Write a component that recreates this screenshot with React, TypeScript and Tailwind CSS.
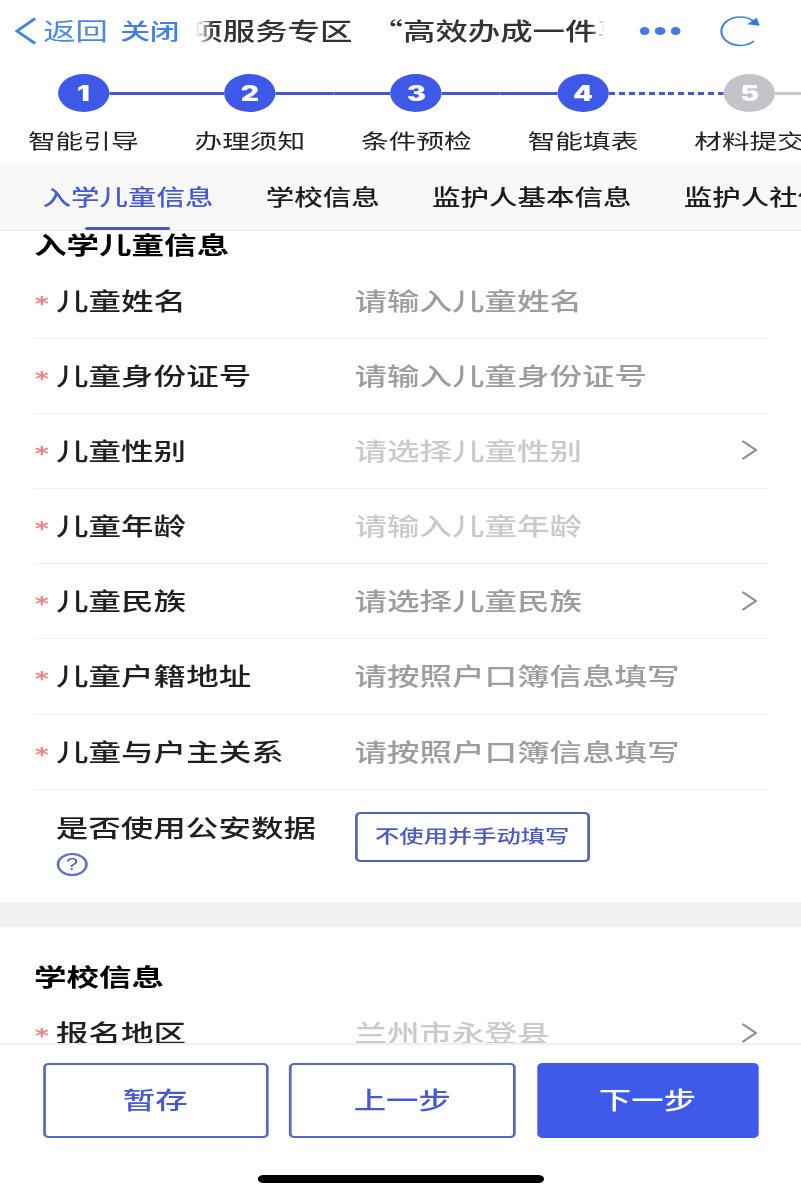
import clsx from "clsx";

type Field = {
    label: string;
    placeholder: string;
    muted?: boolean;
    select?: boolean;
};

const steps = ["智能引导", "办理须知", "条件预检", "智能填表", "材料提交"];
const tabs = ["入学儿童信息", "学校信息", "监护人基本信息", "监护人社保信息"];
const currentStep = 4;

const childFields: Field[] = [
    { label: "儿童姓名", placeholder: "请输入儿童姓名" },
    { label: "儿童身份证号", placeholder: "请输入儿童身份证号" },
    { label: "儿童性别", placeholder: "请选择儿童性别", muted: true, select: true },
    { label: "儿童年龄", placeholder: "请输入儿童年龄", muted: true },
    { label: "儿童民族", placeholder: "请选择儿童民族", select: true },
    { label: "儿童户籍地址", placeholder: "请按照户口簿信息填写" },
    { label: "儿童与户主关系", placeholder: "请按照户口簿信息填写" },
];

function NavBar() {
    return (
        <header className="flex h-[62px] shrink-0 items-center pl-[11px]">
            <svg width="16" height="28" viewBox="0 0 16 28" fill="none" stroke="#3f86e0" strokeWidth="2.4">
                <path d="M15 1.5L1.5 14L15 26.5" />
            </svg>
            <span className="ml-[5px] pb-[2px] text-[24px] text-[#4a88e2]">返回</span>
            <span className="ml-[9px] pb-[3px] text-[22px] font-medium text-[#3f80e0]">关闭</span>
            {/* Scrolling title, faded on both edges */}
            <div className="ml-[12px] flex w-[305px] overflow-hidden pb-[2px] whitespace-nowrap text-[24px] font-medium text-[#333] [mask-image:linear-gradient(to_right,transparent,black_14px,black_292px,transparent_303px)]">
                <span className="-ml-[4px]">项服务专区</span>
                <span className="ml-[13.5px]">“高效办成一件事”</span>
            </div>
            <div className="ml-[23.5px] flex gap-[4px]">
                <i className="size-[7.5px] rounded-full bg-[#4479e6]" />
                <i className="size-[7.5px] rounded-full bg-[#4479e6]" />
                <i className="size-[7.5px] rounded-full bg-[#4479e6]" />
            </div>
            <svg className="ml-[28.7px]" width="31" height="32" viewBox="0 0 31 32" fill="none">
                <path d="M25.5 26A14 14.2 0 1 1 25.5 6.5" stroke="#3f82d8" strokeWidth="1.6" />
                <path d="M29.8 10.8L20.5 9.2L27.5 2.8Z" fill="#2f7cd6" />
            </svg>
        </header>
    );
}

function Stepper() {
    return (
        <div className="flex h-[101px] w-[620px] shrink-0">
            {steps.map((step, index) => {
                const number = index + 1;
                const done = number <= currentStep;
                return (
                    <div key={step} className="flex w-[123.4px] shrink-0 flex-col items-center pt-[12px]">
                        <div className="flex w-full items-center">
                            <span
                                className={clsx(
                                    "h-[3px] flex-1",
                                    index > 0 && done && "bg-[#4658cf]",
                                    !done && "bg-[repeating-linear-gradient(to_left,#4658cf_0_4.4px,transparent_4.4px_7.4px)]"
                                )}
                            />
                            <span
                                className={clsx(
                                    "flex size-[38px] items-center justify-center rounded-full pt-[2px] font-[Inter] text-[21px] font-black text-white",
                                    done ? "bg-[#3e58e8]" : "bg-[#c3c3cb]"
                                )}
                            >
                                {number}
                            </span>
                            <span
                                className={clsx(
                                    "h-[3px] flex-1",
                                    number < currentStep && "bg-[#4658cf]",
                                    number === currentStep && "bg-[repeating-linear-gradient(to_right,#4658cf_0_4.4px,transparent_4.4px_7.4px)]",
                                    !done && "bg-[#c8c8cc]"
                                )}
                            />
                        </div>
                        <span className="mt-[12.5px] text-[20.5px] leading-[30px] text-[#222]">{step}</span>
                    </div>
                );
            })}
        </div>
    );
}

function Tabs() {
    return (
        <nav className="flex h-[68px] shrink-0 gap-[38.8px] overflow-hidden border-b border-[#eee] bg-[#f8f8f9] pl-[31.5px]">
            {tabs.map((tab, index) => (
                <div
                    key={tab}
                    className={clsx(
                        "flex shrink-0 flex-col items-center text-[21.1px] font-medium",
                        index === 0 ? "text-[#4659d6]" : "text-[#1c1c1c]"
                    )}
                >
                    <span className="pt-[18px] leading-[30px]">{tab}</span>
                    {index === 0 && <i className="mt-auto h-[3px] w-[63px] rounded-full bg-[#4a55cc]" />}
                </div>
            ))}
        </nav>
    );
}

function FieldRow({ label, placeholder, muted, select }: Field) {
    return (
        <div className="mx-[25px] flex h-[75.17px] shrink-0 items-center border-b border-[#f0f0f0] text-[24.1px] font-medium">
            <span className="w-[16.5px] pt-[4px] pl-[0.7px] font-['DejaVu_Sans'] text-[20px] font-bold text-[#ee8380]">*</span>
            <span className="w-[221px] pb-[2px] text-[#1f1f1f]">{label}</span>
            <span className={clsx("flex-1 pb-[2px]", muted ? "text-[#cacaca]" : "text-[#9d9d9d]")}>{placeholder}</span>
            {select && (
                <svg className="mr-[8.5px] mb-[1px]" width="12" height="20" viewBox="0 0 12 20" fill="none" stroke="#909090" strokeWidth="1.9">
                    <path d="M1 1L11 10L1 19" />
                </svg>
            )}
        </div>
    );
}

function Footer() {
    return (
        <footer className="flex h-[152px] shrink-0 flex-col items-center border-t-2 border-[#efefef] bg-white pt-[18px]">
            <div className="flex h-[75px] w-full gap-[15.5px] pr-[32.3px] pl-[31.5px] text-[24px] font-medium">
                <button className="w-[167px] rounded-[4px] border-2 border-[#5767c6] pb-[4px] text-[#4659cf]">暂存</button>
                <button className="w-[168px] rounded-[4px] border-2 border-[#5767c6] pb-[4px] text-[#4659cf]">上一步</button>
                <button className="flex-1 rounded-[4px] bg-[#3f59e8] pb-[4px] text-white">下一步</button>
            </div>
            <div className="mt-[37px] h-[8px] w-[212px] rounded-full bg-black" />
        </footer>
    );
}

export default function App() {
    return (
        <div className="h-[1195px] w-[801px] overflow-hidden bg-white">
            <div className="flex h-[1195px] w-[594px] origin-top-left scale-x-[1.35] flex-col overflow-hidden bg-white font-['Noto_Sans_CJK_SC',sans-serif]">
                <NavBar />
                <Stepper />
                <Tabs />

                <main className="flex h-[812px] shrink-0 flex-col overflow-hidden">
                    <h2 className="h-[32.6px] shrink-0 pl-[25.2px] text-[24.1px] leading-[25px] font-bold text-black">入学儿童信息</h2>
                    {childFields.map((field) => (
                        <FieldRow key={field.label} {...field} />
                    ))}

                    <div className="flex h-[112.4px] shrink-0 pt-[22px] pl-[41.3px]">
                        <div className="w-[221.5px] text-[24.1px] leading-[29px] font-medium text-[#1f1f1f]">
                            是否使用公安数据
                            <span className="mt-[12px] ml-[0.5px] flex size-[23px] items-center justify-center rounded-full border-2 border-[#5f6fcc] font-['Liberation_Sans'] text-[16px] font-normal text-[#4558c0]">
                                ?
                            </span>
                        </div>
                        <button className="h-[50px] w-[174px] rounded-[4px] border-2 border-[#5560bd] pb-[3px] text-[18px] font-medium text-[#4a5ac4]">
                            不使用并手动填写
                        </button>
                    </div>

                    <div className="h-[25px] shrink-0 bg-[#f1f1f1]" />

                    <h2 className="h-[69px] shrink-0 pt-[33px] pl-[25.2px] text-[24.1px] leading-[32px] font-bold text-black">学校信息</h2>
                    <FieldRow label="报名地区" placeholder="兰州市永登县" muted select />
                </main>

                <Footer />
            </div>
        </div>
    );
}
